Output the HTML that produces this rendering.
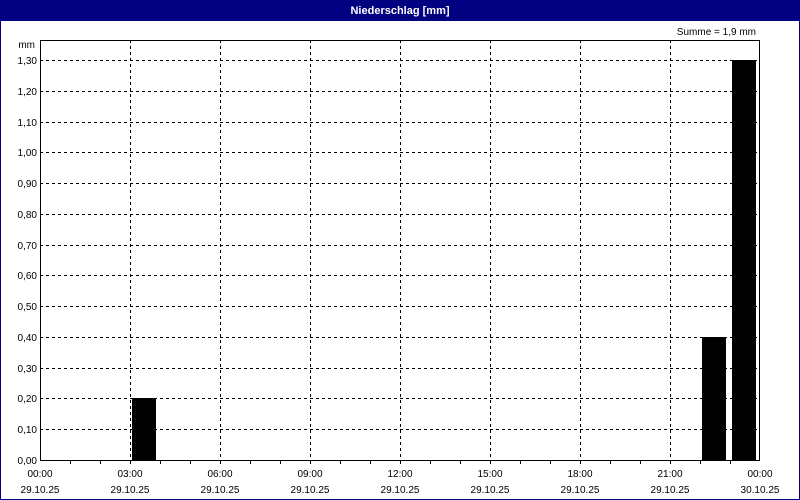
<!DOCTYPE html>
<html><head><meta charset="utf-8"><style>
html,body{margin:0;padding:0;background:#fff}
svg{display:block}
text{font-family:"Liberation Sans",sans-serif;font-size:10px;fill:#000}
</style></head><body>
<svg width="800" height="500" xmlns="http://www.w3.org/2000/svg">
<rect x="0" y="0" width="800" height="500" fill="#fff"/>
<rect x="0" y="0" width="800" height="21" fill="#000080"/>
<rect x="0.5" y="0.5" width="799" height="499" fill="none" stroke="#000080"/>
<text x="400" y="14" text-anchor="middle" style="font-weight:bold;font-size:11px;fill:#fff">Niederschlag [mm]</text>
<text x="756" y="35" text-anchor="end">Summe = 1,9 mm</text>
<g stroke="#000" stroke-width="1" stroke-dasharray="3,3" fill="none">
<path d="M40 429.5H760M40 398.5H760M40 368.5H760M40 337.5H760M40 306.5H760M40 275.5H760M40 245.5H760M40 214.5H760M40 183.5H760M40 152.5H760M40 122.5H760M40 91.5H760M40 60.5H760"/>
<path d="M130.5 40V460M220.5 40V460M310.5 40V460M400.5 40V460M490.5 40V460M580.5 40V460M670.5 40V460"/>
</g>
<g fill="#000">
<rect x="132" y="398" width="24" height="62"/>
<rect x="702" y="337" width="24" height="123"/>
<rect x="732" y="60" width="24" height="400"/>
</g>
<rect x="40.5" y="40.5" width="719" height="420" fill="none" stroke="#000"/>
<g stroke="#000">
<path d="M70.5 460V464M100.5 460V464M130.5 460V464M160.5 460V464M190.5 460V464M220.5 460V464M250.5 460V464M280.5 460V464M310.5 460V464M340.5 460V464M370.5 460V464M400.5 460V464M430.5 460V464M460.5 460V464M490.5 460V464M520.5 460V464M550.5 460V464M580.5 460V464M610.5 460V464M640.5 460V464M670.5 460V464M700.5 460V464M730.5 460V464"/>
</g>
<g text-anchor="end">
<text x="35" y="48">mm</text>
<text x="37" y="64">1,30</text>
<text x="37" y="95">1,20</text>
<text x="37" y="126">1,10</text>
<text x="37" y="156">1,00</text>
<text x="37" y="187">0,90</text>
<text x="37" y="218">0,80</text>
<text x="37" y="249">0,70</text>
<text x="37" y="279">0,60</text>
<text x="37" y="310">0,50</text>
<text x="37" y="341">0,40</text>
<text x="37" y="372">0,30</text>
<text x="37" y="402">0,20</text>
<text x="37" y="433">0,10</text>
<text x="37" y="464">0,00</text>
</g>
<g text-anchor="middle">
<text x="40" y="477">00:00</text><text x="40" y="493">29.10.25</text>
<text x="130" y="477">03:00</text><text x="130" y="493">29.10.25</text>
<text x="220" y="477">06:00</text><text x="220" y="493">29.10.25</text>
<text x="310" y="477">09:00</text><text x="310" y="493">29.10.25</text>
<text x="400" y="477">12:00</text><text x="400" y="493">29.10.25</text>
<text x="490" y="477">15:00</text><text x="490" y="493">29.10.25</text>
<text x="580" y="477">18:00</text><text x="580" y="493">29.10.25</text>
<text x="670" y="477">21:00</text><text x="670" y="493">29.10.25</text>
<text x="760" y="477">00:00</text><text x="760" y="493">30.10.25</text>
</g>
</svg>
</body></html>
